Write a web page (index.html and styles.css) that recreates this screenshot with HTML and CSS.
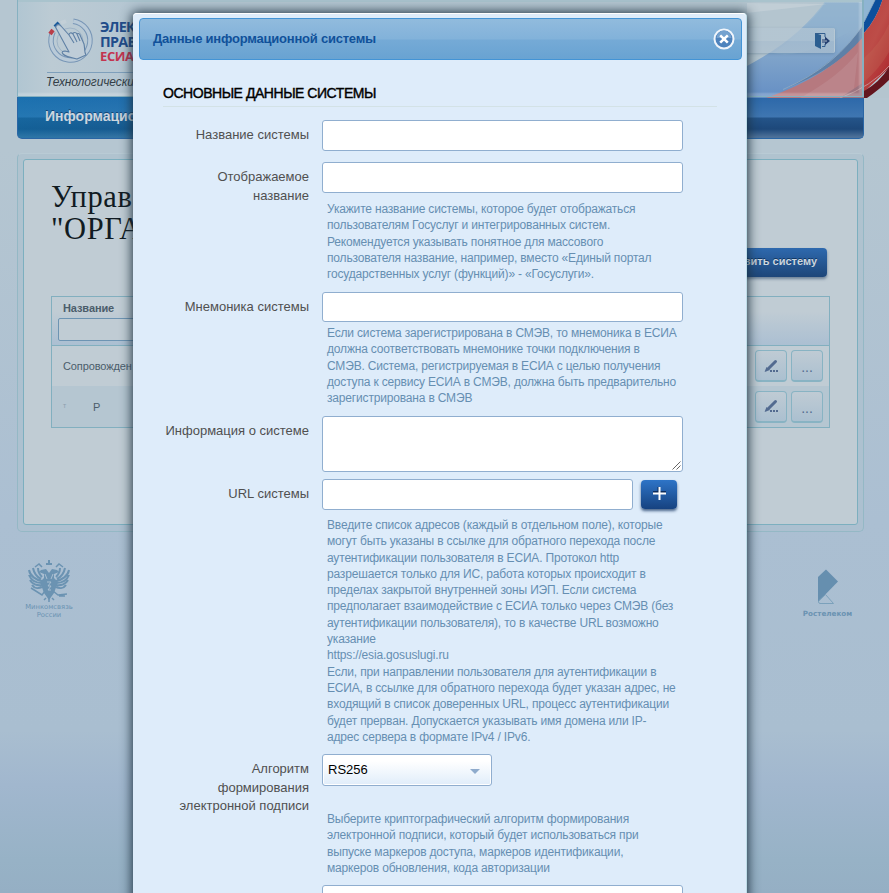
FILE: index.html
```html
<!DOCTYPE html>
<html lang="ru">
<head>
<meta charset="utf-8">
<title>Данные информационной системы</title>
<link rel="stylesheet" href="styles.css">
</head>
<body>
<div class="page">
  <svg class="swoosh" width="249" height="98" viewBox="640 0 249 98" aria-hidden="true">
    <defs>
      <linearGradient id="sky" x1="0" y1="0" x2="0" y2="1"><stop offset="0" stop-color="#a3bfd2"/><stop offset="1" stop-color="#658fc4"/></linearGradient>
      <linearGradient id="red" x1="0" y1="0" x2=".6" y2="1"><stop offset="0" stop-color="#b9403f"/><stop offset=".5" stop-color="#bd4d48"/><stop offset="1" stop-color="#b02c31"/></linearGradient>
    </defs>
    <path fill="#b4c5cf" d="M640 0h250v98H640z"/>
    <path fill="url(#sky)" d="M747 66Q800 38 826 0H864V98H747z"/>
    <path fill="#8fb1ce" opacity=".7" d="M773 53Q800 60 847 33L862 25V3H825Q805 32 773 53z"/>
    <path fill="#5e80a7" d="M784 89Q835 66 864 24V38Q835 70 784 89z"/>
    <path fill="#b6797f" d="M766 98Q830 76 864 36V98z"/>
    <path fill="#c29298" opacity=".45" d="M800 98Q840 76 858 52L853 98z"/>
    <path fill="#9c737f" d="M840 98L864 82V98z"/>
    <path fill="#8fb5d3" d="M864 0H875L864 22z"/>
    <path fill="#0c4f9c" d="M864 22L875 0H882.500Q876 20 864 33z"/>
    <path fill="url(#red)" d="M864 33Q876 20 882.500 0H889V68L864 92z"/>
    <path fill="#c56d59" opacity=".3" d="M864 58Q880 44 889 24V52Q880 68 864 82z"/>
    <path fill="#63151e" d="M864 91Q880 82 889 67V80Q880 89 867 98H864z"/>
    <path fill="none" stroke="#91acc4" stroke-width=".8" d="M783 89.500Q837 66 864 23M875 0L864 22"/>
    <path fill="none" stroke="#c4a3a6" stroke-width=".8" d="M840 98Q872 86 889 66"/>
    <path fill="#c6d1d8" opacity=".7" d="M747 3L827 4L747 13z"/>
  </svg>

  <header class="header">
    <div class="brand">
      <svg class="logo" width="47" height="48" viewBox="0 0 47 48" fill="none" aria-hidden="true">
        <circle cx="23.500" cy="23.500" r="19.500" stroke="#7896b6" stroke-width="5.500" stroke-dasharray="98 25" transform="rotate(-82 23.500 23.500)"/>
        <circle cx="23.500" cy="23.500" r="19.500" stroke="#b9cad8" stroke-width="3.500" stroke-dasharray="98 25" transform="rotate(-82 23.500 23.500)"/>
        <circle cx="23" cy="24" r="13" stroke="#9fb4c7"/>
        <path stroke="#b93d49" stroke-width="4" d="M3 17l3-4"/>
        <path stroke="#19599a" stroke-width="4" d="M8 10l4-4"/>
        <path stroke="#c3cfd7" stroke-width="4" d="M14 6l5-2"/>
        <path fill="#bfcdd8" stroke="#5f80a5" stroke-width="1.100" stroke-linejoin="round" d="M10 8c2-1 3 0 4 1l8 9c0-2 2-3 4-1 0-2 3-2 4 0 1-1 3 0 3 1l4 9c1 4 0 8 2 11l-9 4c-5-1-11-2-14-5-2-2 0-3 2-3l4 1L9 11c-1-1 0-2 1-3zM22 18l5 8M26 17l4 8M30 17l3 7"/>
      </svg>
      <div class="brand-name"><span>ЭЛЕК</span><span>ПРАВ</span><span class="brand-red">ЕСИА</span></div>
    </div>
    <div class="tagline">Технологически</div>
    <div class="userbar">
      <svg width="17" height="18" viewBox="0 0 17 18" aria-hidden="true"><path fill="#2c5f91" d="M1 1L7 3V17L1 14z"/><path fill="none" stroke="#345f8e" d="M1 1.500H11V5M7 14.500H11V12"/><path fill="#243f70" d="M7 7.500h4V4.500l5 4.500-5 4V10.500H7z"/><path stroke="#a9bac9" d="M7.500 2v15M8 9h5"/></svg>
    </div>
  </header>
  <nav class="nav">Информацио</nav>

  <main class="content">
    <div class="content-inner">
      <h1>Управ<br>"ОРГА</h1>
      <div class="toolbar"><span class="btn-add">вить систему</span></div>
      <div class="table">
        <div class="thead"><b>Название</b><div class="filter"></div></div>
        <div class="trow"><span>Сопровожден</span>
          <i class="cell-btn"><svg width="14" height="14" viewBox="0 0 14 14"><path stroke="#536b90" stroke-width="3" stroke-linecap="round" d="M11.500 2.500L4.500 9.500"/><path fill="#536b90" d="M.5 13l2-5 3.500 3zM6 11h2v2H6zM9 11h2v2H9zM12 11h2v2h-2z"/></svg></i>
          <i class="cell-btn dots">...</i></div>
        <div class="trow alt"><span class="masked"><em>т</em>Р</span>
          <i class="cell-btn"><svg width="14" height="14" viewBox="0 0 14 14"><path stroke="#536b90" stroke-width="3" stroke-linecap="round" d="M11.500 2.500L4.500 9.500"/><path fill="#536b90" d="M.5 13l2-5 3.500 3zM6 11h2v2H6zM9 11h2v2H9zM12 11h2v2h-2z"/></svg></i>
          <i class="cell-btn dots">...</i></div>
      </div>
    </div>
  </main>

  <footer class="footer">
    <div class="partner">
      <svg width="42" height="43" viewBox="0 0 42 43" aria-hidden="true" fill="none" stroke="#6b93b2">
        <path fill="#6b93b2" stroke="none" d="M20 0h2v3h2v2h-6V3h2zM13 10l5-1 3 4 3-4 5 1 2 2-5 2v4l4 4-4 11-5 7-5-7-4-11 4-4v-4l-5-2z"/>
        <path stroke-width="2" d="M14 21C8 20 2 16 1 10M14 23C8 23 3 20 1 15M14 25C9 26 4 24 2 20M14 27C10 29 6 28 4 25M13 19C9 17 6 13 5 8M14 17C11 14 10 11 10 8M28 21c6-1 12-5 13-11M28 23c6 0 11-3 13-8M28 25c5 1 10-1 12-5M28 27c4 2 8 1 10-2M29 19c4-2 7-6 8-11M28 17c3-3 4-6 4-9"/>
        <path stroke-width="1.500" d="M3 28l11 7 3-4M39 34l-9 1-5-4M31 36h6M7 7l4-3 3 3M35 7l-4-3-3 3M18 38l-2 2M24 38l2 2M21 36v6"/>
        <path stroke="#a9bed0" d="M19 22h4l-3 4h3l-3 4h3M17 14l2 5M25 14l-2 5"/>
      </svg>
      <span>Минкомсвязь<br>России</span>
    </div>
    <div class="partner partner-rt">
      <svg width="22" height="36" viewBox="0 0 22 36" aria-hidden="true"><path fill="#668faf" d="M1 8L9 0.500 21 12.500 1 33z"/><path fill="none" stroke="#7ba1bb" d="M1.500 32l7-6.500 8 9H3q-1.500 0-1.500-2z"/></svg>
      <span>Ростелеком</span>
    </div>
  </footer>

  <section class="modal">
    <div class="modal-head"><span>Данные информационной системы</span>
      <svg width="22" height="22" viewBox="0 0 22 22" aria-hidden="true"><circle cx="11" cy="11" r="9.500" fill="#4e83bd" stroke="#f0f5fb" stroke-width="2"/><path d="M3.500 10a7.500 7.500 0 0 1 15 0z" fill="#75a2cf"/><path stroke="#fff" stroke-width="2.600" d="M7.200 7.400l7.600 7.200M14.800 7.400l-7.600 7.200"/></svg>
    </div>
    <div class="form">
      <h2><span>ОСНОВНЫЕ ДАННЫЕ СИСТЕМЫ</span></h2>
      <div class="row r1"><label>Название системы</label><div class="field"><div class="input"></div></div></div>
      <div class="row r2"><label>Отображаемое<br>название</label><div class="field"><div class="input"></div>
        <p>Укажите название системы, которое будет отображаться<br>пользователям Госуслуг и интегрированных систем.<br>Рекомендуется указывать понятное для массового<br>пользователя название, например, вместо «Единый портал<br>государственных услуг (функций)» - «Госуслуги».</p></div></div>
      <div class="row r3"><label>Мнемоника системы</label><div class="field"><div class="input short"></div>
        <p>Если система зарегистрирована в СМЭВ, то мнемоника в ЕСИА<br>должна соответствовать мнемонике точки подключения в<br>СМЭВ. Система, регистрируемая в ЕСИА с целью получения<br>доступа к сервису ЕСИА в СМЭВ, должна быть предварительно<br>зарегистрирована в СМЭВ</p></div></div>
      <div class="row r4"><label>Информация о системе</label><div class="field"><div class="input area"><svg width="9" height="9" viewBox="0 0 9 9" aria-hidden="true"><path stroke="#555" stroke-width=".9" d="M.5 8.500l8-8M4.500 8.500l4-4"/></svg></div></div></div>
      <div class="row r5"><label>URL системы</label><div class="field"><div class="url"><div class="input"></div><span class="plus"><svg width="13" height="13" viewBox="0 0 13 13" aria-hidden="true"><path stroke="#0c2c5c" stroke-width="2" d="M0 5h13M5.500 0v6"/><path stroke="#fff" stroke-width="2" d="M0 6.500h13M6.500 0v13"/></svg></span></div>
        <p>Введите список адресов (каждый в отдельном поле), которые<br>могут быть указаны в ссылке для обратного перехода после<br>аутентификации пользователя в ЕСИА. Протокол http<br>разрешается только для ИС, работа которых происходит в<br>пределах закрытой внутренней зоны ИЭП. Если система<br>предполагает взаимодействие с ЕСИА только через СМЭВ (без<br>аутентификации пользователя), то в качестве URL возможно<br>указание<br>https://esia.gosuslugi.ru<br>Если, при направлении пользователя для аутентификации в<br>ЕСИА, в ссылке для обратного перехода будет указан адрес, не<br>входящий в список доверенных URL, процесс аутентификации<br>будет прерван. Допускается указывать имя домена или IP-<br>адрес сервера в формате IPv4 / IPv6.</p></div></div>
      <div class="row r6"><label>Алгоритм<br>формирования<br>электронной подписи</label><div class="field"><div class="select"><span>RS256</span><i></i></div>
        <p>Выберите криптографический алгоритм формирования<br>электронной подписи, который будет использоваться при<br>выпуске маркеров доступа, маркеров идентификации,<br>маркеров обновления, кода авторизации</p></div></div>
      <div class="row r7"><label></label><div class="field"><div class="input"></div></div></div>
    </div>
  </section>
</div>
</body>
</html>
```
FILE: styles.css
```css
* { box-sizing: border-box; }
html, body { margin: 0; height: 893px; overflow: hidden; }
body { font-family: "Liberation Sans", Arial, sans-serif; font-size: 13px; color: #505050; }
h1, h2, p { margin: 0; font-weight: normal; }
svg { display: block; flex: none; }
i, em { font-style: normal; }

.page {
  position: relative; width: 889px; height: 893px; overflow: hidden; padding: 0 25px 0 17px;
  background: linear-gradient(#b5c6d1 0, #b5c6d1 150px, #abbfd2 520px, #a9bed0 730px, #a1b7ce 785px, #97b2c6 860px, #95afc4 893px);
}
.swoosh { position: absolute; left: 640px; top: 0; }

.header {
  position: relative; width: 847px; height: 97px; padding: 17px 0 0 29px;
  border: solid #86b1c1; border-width: 0 2px 1px 1px;
  background: linear-gradient(90deg, #b1c6d2, #bccbd4 4%, #b4c6d2 14%, #b4c6d200 86%);
  box-shadow: inset 0 2px #a9c3cd, inset -3px -3px 2px #ffffff35;
}
.brand { display: flex; gap: 6px; height: 56px; border-bottom: 1px solid #7e9fbb; padding-bottom: 6px; width: 92px; }
.brand-name { display: flex; flex-direction: column; font: bold 14.300px/15px "Open Sans", sans-serif; color: #214c8a; padding-top: 2px; letter-spacing: -.7px; }
.brand-name .brand-red { color: #c33550; font-size: 13px; letter-spacing: -.4px; }
.tagline { white-space: nowrap; margin: 2px 0 0 -1px; font-style: italic; font-size: 12px; color: #333e47; letter-spacing: -.1px; }
.userbar {
  position: absolute; right: 27px; top: 28px; width: 220px; height: 25px; padding-right: 3px;
  display: flex; align-items: center; justify-content: flex-end; border-radius: 2px;
  background: linear-gradient(#b4c6d3b0 50%, #a8bdcfb0 52%, #adc0cfb0); border-right: 1px solid #b7c8d4; box-shadow: 0 1px 3px #44668855;
}
.nav {
  width: 847px; height: 42px; margin-top: 0; padding-left: 27px; line-height: 38px;
  font-size: 14px; font-weight: bold; color: #ccd6df; text-shadow: 0 -1px #154575; letter-spacing: 0; white-space: nowrap;
  border: 1px solid #2a66a5; border-top: 0; border-radius: 0 0 5px 5px;
  background: linear-gradient(90deg, #0a78b480, #0a78b400 50%), linear-gradient(#2c68a9 0, #3f76b1 20px, #245489 21px, #1d487a 32px, #4d7199 40px);
}

.content { width: 847px; height: 379px; margin-top: 14px; padding: 5px; border: 1px solid #94b8c5; border-top-color: #b9cbd5; border-radius: 5px; background: #adc1ce88; }
.content-inner { height: 366px; padding: 21px 27px 0; background: #c0ccd4; border: 1px solid #7cafbf; border-radius: 3px; }
h1 { height: 67px; font: 30.500px/32px "Liberation Serif", serif; color: #111b22; letter-spacing: .6px; white-space: nowrap; }
.toolbar { display: flex; justify-content: flex-end; margin-right: 3px; }
.btn-add { width: 120px; height: 29px; line-height: 26px; font-size: 11px; font-weight: bold; color: #ccd6df; text-shadow: 0 -1px #123763; white-space: nowrap; text-align: right; padding-right: 10px; border-radius: 4px; background: linear-gradient(#2e69ae, #1d4679); box-shadow: 0 2px 3px #36506f99; }
.table { width: 779px; margin-top: 19px; border: 1px solid #82afbf; font-size: 11px; color: #4b5d6b; }
.thead { height: 49px; padding: 5px 6px 0; border-bottom: 1px solid #82afbf; background: linear-gradient(#c0ccd4 30%, #abbfd2); }
.thead b { display: block; line-height: 13px; margin: 0 5px 3px; letter-spacing: -.1px; }
.filter { width: 300px; height: 23px; border: 1px solid #6d94b3; border-radius: 2px; background: #c0ccd4; }
.trow { display: flex; align-items: center; gap: 4px; height: 40px; padding: 0 6px 0 11px; letter-spacing: -.1px; }
.trow span { flex: 1; }
.trow.alt { height: 41px; background: #b5c6d1; }
.masked em { color: #8d9fae; margin-right: 27px; font-size: 7px; vertical-align: 3px; }
.cell-btn { width: 32px; height: 32px; display: flex; align-items: center; justify-content: center; border: 1px solid #88b3c3; border-bottom-width: 2px; border-radius: 4px; background: linear-gradient(#bfcbd4, #abc0d0); color: #536b90; }
.dots { font-size: 14px; letter-spacing: 0; padding-top: 3px; }

.footer { display: flex; justify-content: space-between; margin-top: 28px; padding: 0 12px 0 8px; }
.partner { width: 48px; display: flex; flex-direction: column; align-items: center; font: 6.800px/8px "DejaVu Sans", sans-serif; color: #6b93b2; text-align: center; }
.partner span { white-space: nowrap; }
.partner-rt { padding-top: 9px; width: 49px; font-size: 7.200px; font-weight: bold; }
.partner-rt span { margin-top: 5px; }

.modal {
  position: absolute; left: 133px; top: 13px; width: 614px; height: 900px; padding: 5px 5px 0 6px;
  background: #deecfa; border-radius: 4px; border-right: 1px solid #bfdde8; box-shadow: 0 0 12px 1px #1c303f, inset 0 1px #fff;
}
.modal-head {
  width: 603px; height: 42px; padding: 0 6px 1px 13px; display: flex; align-items: center; justify-content: space-between;
  border: 1px solid #4394d6; border-radius: 4px; color: #10519a; font-weight: bold; font-size: 13px; letter-spacing: -.22px;
  background: linear-gradient(#91bbdd 0, #82b2da 20px, #75aad6 21px, #69a3d2);
}
.form { padding-left: 24px; }
h2 { width: 554px; height: 47px; padding-top: 24px; border-bottom: 1px solid #d3e2e6; font-size: 14px; line-height: 18px; color: #000; letter-spacing: -.46px; -webkit-text-stroke: .4px #000; white-space: nowrap; }
.row { display: flex; gap: 13px; }
.row label { width: 146px; padding-top: 6px; text-align: right; line-height: 18.600px; white-space: nowrap; }
.r1 { margin-top: 13px; height: 42px; }
.r2 { height: 130px; }
.r3 { height: 124px; }
.r4 { height: 63px; }
.r5 { height: 275px; }
.r6 { height: 131px; }
.field { width: 361px; }
.input { height: 31px; background: #fff; border: 1px solid #90aecf; border-radius: 3px; }
.short { height: 30px; }
.area { height: 56px; display: flex; justify-content: flex-end; align-items: flex-end; padding: 0 1px 1px 0; }
.field p { margin: 8px 0 0 5px; font-size: 12px; line-height: 16.300px; color: #668fb2; white-space: nowrap; letter-spacing: -.175px; }
.r3 p { margin-top: 3px; }
.r5 p { margin-top: 7px; }
.url { display: flex; gap: 8px; }
.url .input { width: 311px; }
.plus { width: 36px; height: 29px; margin-top: 1px; padding-bottom: 3px; display: flex; align-items: center; justify-content: center; border-radius: 4px; background: linear-gradient(#2e74c7, #164280); box-shadow: 0 2px 3px #4a658a; }
.select { width: 170px; height: 32px; padding: 0 11px 2px 5px; display: flex; align-items: center; justify-content: space-between; border: 1px solid #90aecf; border-radius: 3px; color: #000; background: linear-gradient(#fff 20%, #e0edfa); box-shadow: inset 0 0 0 1px #fff; }
.select i { border: 5px solid transparent; border-top-color: #8fabcc; border-bottom: 0; margin-top: 4px; }
.r6 p { margin-top: 25px; }
```
